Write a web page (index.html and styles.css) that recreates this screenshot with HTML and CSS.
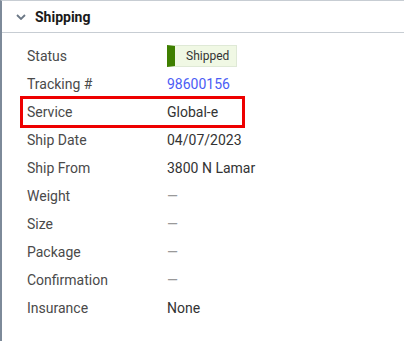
FILE: index.html
```html
<!DOCTYPE html>
<html lang="en">
<head>
    <meta charset="UTF-8">
    <title>Shipping</title>
    <link rel="stylesheet" href="styles.css">
</head>
<body>
    <div class="panel">
        <div class="panel-header">
            <svg class="chevron" width="10" height="6" viewBox="0 0 10 6"><path d="M1 1 L5 5 L9 1" fill="none" stroke="#6b7785" stroke-width="1.8"/></svg>
            <span class="panel-title">Shipping</span>
        </div>
        <div class="panel-body">
            <div class="row">
                <div class="label">Status</div>
                <div class="value"><span class="badge">Shipped</span></div>
            </div>
            <div class="row">
                <div class="label">Tracking #</div>
                <div class="value"><a class="link" href="#">98600156</a></div>
            </div>
            <div class="row highlight">
                <div class="label">Service</div>
                <div class="value">Global-e</div>
            </div>
            <div class="row">
                <div class="label">Ship Date</div>
                <div class="value">04/07/2023</div>
            </div>
            <div class="row">
                <div class="label">Ship From</div>
                <div class="value">3800 N Lamar</div>
            </div>
            <div class="row">
                <div class="label">Weight</div>
                <div class="value dash">—</div>
            </div>
            <div class="row">
                <div class="label">Size</div>
                <div class="value dash">—</div>
            </div>
            <div class="row">
                <div class="label">Package</div>
                <div class="value dash">—</div>
            </div>
            <div class="row">
                <div class="label">Confirmation</div>
                <div class="value dash">—</div>
            </div>
            <div class="row">
                <div class="label">Insurance</div>
                <div class="value">None</div>
            </div>
        </div>
    </div>
</body>
</html>
```

FILE: styles.css
```css
body {
    margin: 0;
    font-family: Roboto, 'Liberation Sans', Arial, sans-serif;
    background-color: white;
    color: #3c3c3c;
}
.panel {
    border-left: 2px solid #7d8a99;
    border-top: 1px solid #c7cdd3;
    height: 100vh;
    box-sizing: border-box;
    overflow: hidden;
}
.panel-header {
    display: flex;
    align-items: center;
    height: 31px;
    padding-left: 14px;
    border-bottom: 1px solid #c7cdd3;
}
.chevron {
    margin-right: 9px;
    margin-top: 1px;
}
.panel-title {
    font-size: 14px;
    font-weight: bold;
    color: #1a1a1a;
}
.panel-body {
    padding: 9px 0 0 18px;
}
.row {
    display: flex;
    align-items: center;
    height: 28px;
    font-size: 14px;
    white-space: nowrap;
}
.label {
    flex-shrink: 0;
    width: 140px;
    padding-left: 7px;
    color: #4a4a4a;
}
.value {
    color: #333;
}
.dash {
    color: #999;
}
.highlight {
    width: 225px;
    box-sizing: border-box;
    height: 32px;
    margin: -2px 0;
    border: 3px solid #ee0000;
}
.highlight .label {
    padding-left: 4px;
}
.badge {
    display: inline-block;
    font-size: 12px;
    line-height: 20px;
    padding: 0 7px 0 11px;
    background-color: #f0f8e4;
    border: 1px solid #dfe9d6;
    border-left: 8px solid #3f7f00;
    color: #333;
}
.link {
    color: #4b5cf5;
    text-decoration: none;
}
```
